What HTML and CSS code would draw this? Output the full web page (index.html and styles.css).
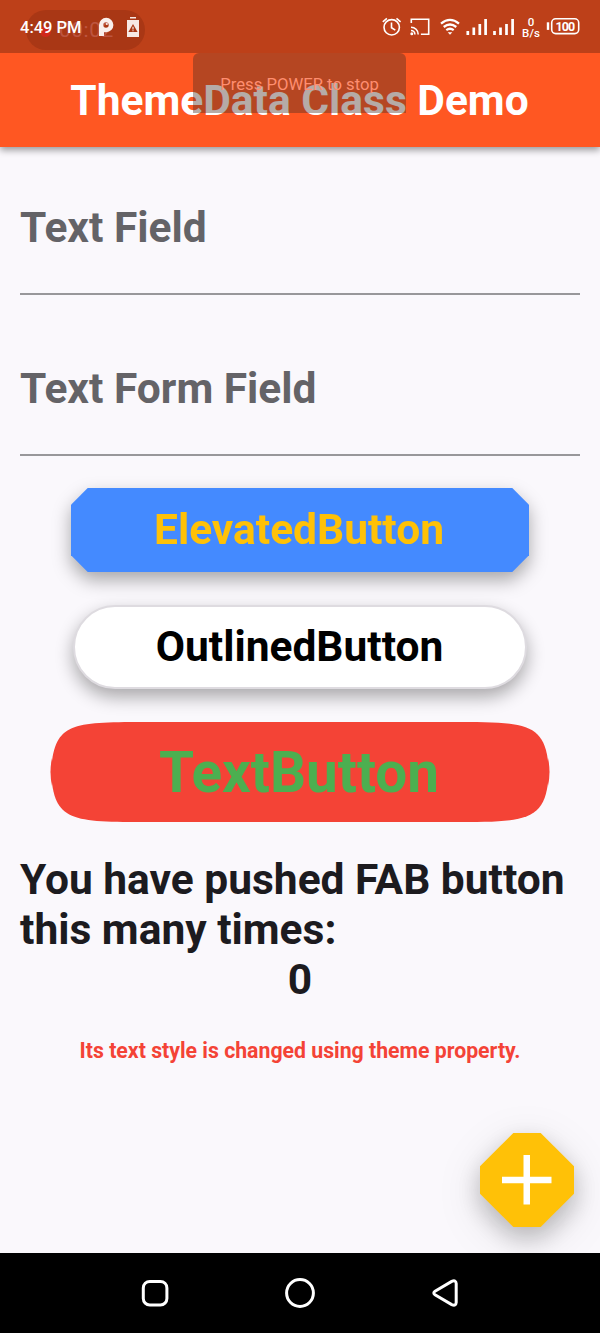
FILE: index.html
```html
<!DOCTYPE html>
<html lang="en">
<head>
<meta charset="utf-8">
<title>ThemeData Class Demo</title>
<link rel="stylesheet" href="styles.css">
</head>
<body>
<div class="screen">
  <div class="statusbar">
    <div class="recorder"><i class="rec-dot"></i><span>00:02</span></div>
    <div class="status-left">
      <span class="clock">4:49 PM</span>
      <svg class="ic-p" width="16" height="20" viewBox="0 0 16 20"><path fill="#f9efec" fill-rule="evenodd" d="M1 19V8a7.2 7.2 0 1 1 7.2 7.2H6V19zM8 5.3a2.7 2.7 0 1 0 0 5.4 2.7 2.7 0 0 0 0-5.4z"/><circle cx="8.8" cy="7" r="1.1" fill="#f9efec"/></svg>
      <svg class="ic-batt" width="14" height="21" viewBox="0 0 14 21"><path fill="#f7e9e5" d="M4 0h6v1.5H4zM1 3h12v17H1z"/><path fill="#a93715" d="M7 7l4.6 8H2.4z"/><path stroke="#f7e9e5" stroke-width="1.2" d="M7 9.8v2.7m0 .8v1"/></svg>
    </div>
    <svg class="status-right" width="200" height="26" viewBox="380 14 200 26" fill="none" stroke="#fff">
      <g stroke-width="1.6"><circle cx="391.7" cy="27.3" r="7.7"/><path d="M391.5 22.5v5.2l3.8 2.4M382.8 21.8l4.1-3.4M400.6 21.8l-4.1-3.4"/></g>
      <g stroke-width="1.6"><path d="M411.3 23v-3.8h17.4v15h-7.8M411 27.2a7.2 7.2 0 0 1 7.2 7.2M411 30.5a3.9 3.9 0 0 1 3.9 3.9"/><circle cx="411.8" cy="33.8" r=".7" fill="#fff"/></g>
      <g stroke-width="2.3"><path d="M441 23.6q9-7.4 18 0M443.7 27q6.3-5 12.6 0M446.3 30.2q3.7-2.8 7.4 0"/><path d="M447.7 32.2h4.6L450 34.8z" fill="#fff" stroke="none"/></g>
      <g stroke-width="2.7"><path d="M467.8 35v-4M473.8 35v-7.5M479.8 35V24M485.6 35V19M494.5 35v-4M500.5 35v-7.5M506.5 35V24M512.6 35V19"/></g>
      <g fill="#fff" stroke="none" font-family="Roboto, sans-serif" font-weight="500" text-anchor="middle"><text x="531" y="26" font-size="11.5">0</text><text x="531" y="37" font-size="11.5" textLength="18">B/s</text><text x="565.3" y="30.6" font-size="12.5" font-weight="700" textLength="19.5">100</text></g>
      <rect x="551.7" y="18.8" width="27" height="14.8" rx="4" stroke-width="1.6"/><path stroke-width="2.4" d="M548 22.3v7.6"/>
    </svg>
  </div>
  <header class="appbar"><h1>ThemeData Class Demo</h1><div class="toast">Press POWER to stop</div></header>
  <main class="content">
    <div class="field">Text Field</div>
    <div class="field second">Text Form Field</div>
    <div class="elevated"><button class="btn elevated-face"><span>ElevatedButton</span></button></div>
    <button class="btn outlined"><span>OutlinedButton</span></button>
    <button class="btn textbtn">
      <svg class="textbtn-shape" width="500" height="100" viewBox="0 0 500 100"><g fill="#f44336"><path d="M.9 50C4.2 0 20.6 0 100 0H400C479.4 0 495.8 0 499.1 50C495.8 100 479.4 100 400 100H100C20.6 100 4.2 100 .9 50Z"/><path d="M2 36Q-1 50 2 64ZM498 36Q501 50 498 64Z"/></g></svg>
      <span class="textbtn-label">TextButton</span>
    </button>
    <p class="message">You have pushed FAB button this many times:</p>
    <p class="count">0</p>
    <p class="note">Its text style is changed using theme property.</p>
    <div class="fab"><button class="fab-face" aria-label="Add"><svg width="50" height="50" viewBox="0 0 50 50"><path fill="#fff" d="M21.5 0h6.5v21.7H49.5v6.5H28V49.5H21.5V28.2H0V21.7H21.5z"/></svg></button></div>
  </main>
  <nav class="navbar">
    <svg width="30" height="32" viewBox="0 0 30 32"><rect x="3.3" y="4.4" width="23.6" height="23.6" rx="6.5"/></svg>
    <svg width="32" height="32" viewBox="0 0 32 32"><circle cx="16" cy="16" r="13.4"/></svg>
    <svg width="30" height="32" viewBox="0 0 30 32"><path d="M5 14.3L21.7 4.4Q26 2.6 26.2 6.5V25.5Q26 29.4 21.7 27.6L5 17.7Q2.6 16 5 14.3Z"/></svg>
  </nav>
</div>
</body>
</html>
```
FILE: styles.css
```css
* { box-sizing: border-box; }
body { margin: 0; font-family: Roboto, "Liberation Sans", sans-serif; background: #faf8fc; }
h1, p { margin: 0; }
button { border: 0; padding: 0; font: inherit; }
.screen { width: 600px; height: 1333px; display: flex; flex-direction: column; overflow: hidden; background: #faf8fc; }
.statusbar { position: relative; height: 53px; flex: none; background: #bd4019; display: flex; justify-content: space-between; padding: 14px 20px 0; color: #fff; z-index: 3; }
.recorder { position: absolute; left: 26px; top: 10px; width: 119px; height: 40px; border-radius: 20px; background: #a93715; color: #bd5540; font-size: 21px; line-height: 41px; padding-left: 33px; letter-spacing: .5px; }
.rec-dot { position: absolute; left: 14px; top: 16px; width: 11px; height: 11px; border-radius: 50%; background: #d0291a; }
.status-left { position: relative; display: flex; height: 26px; align-items: center; }
.clock { font-size: 16.5px; font-weight: 500; width: 61px; white-space: nowrap; line-height: 28px; padding-top: 1px; }
.ic-p { margin-left: 17px; }
.ic-batt { margin-left: 12px; }
.appbar { position: relative; z-index: 2; height: 94px; flex: none; background: #ff5722; display: flex; align-items: center; justify-content: center; padding-right: 1px; box-shadow: 0 3px 7px rgba(0,0,0,.4); }
.appbar h1 { padding-top: 1px; font-size: 42.5px; line-height: 50px; font-weight: 700; color: #fff; white-space: nowrap; }
.toast { position: absolute; left: 193px; top: 0; width: 213px; height: 60px; border-radius: 6px 6px 0 0; background: rgba(70,45,35,.4); color: #ff8e70; font-size: 16.7px; line-height: 64px; text-align: center; }
.content { position: relative; flex: 1; display: flex; flex-direction: column; align-items: center; padding: 0 20px; }
.field { width: 560px; height: 148px; padding-top: 56px; border-bottom: 2px solid #98979a; color: #646367; font-size: 42.5px; font-weight: 700; line-height: 50px; }
.field.second { height: 161px; padding-top: 69px; }
.elevated { margin-top: 32px; filter: drop-shadow(0 8px 9px rgba(0,0,0,.33)); }
.btn { display: flex; align-items: center; justify-content: center; font-size: 42.5px; font-weight: 700; line-height: 50px; white-space: nowrap; }
.elevated-face { width: 458px; height: 84px; padding-right: 2px; background: #448aff; color: #ffc107; clip-path: polygon(16.7px 0, calc(100% - 16.7px) 0, 100% 16.7px, 100% calc(100% - 16.7px), calc(100% - 16.7px) 100%, 16.7px 100%, 0 calc(100% - 16.7px), 0 16.7px); }
.outlined { width: 454px; height: 84px; padding-right: 1px; margin-top: 33px; border: 2px solid #dedbe0; border-radius: 42px; background: #fff; color: #000; box-shadow: 0 8px 18px rgba(0,0,0,.33); }
.textbtn { position: relative; width: 500px; height: 100px; padding: 1px 2px 0 0; margin-top: 33px; background: transparent; color: #4caf50; font-size: 56.6px; line-height: 70px; }
.textbtn-shape { position: absolute; left: 0; top: 0; }
.textbtn-label { position: relative; }
.message, .count { width: 560px; color: #1c1b1f; font-size: 42.5px; font-weight: 700; line-height: 50px; }
.message { margin-top: 33px; }
.count { text-align: center; }
.note { margin-top: 34px; color: #f44336; font-size: 21.25px; font-weight: 700; line-height: 24px; white-space: nowrap; }
.fab { position: absolute; right: 26px; bottom: 26px; filter: drop-shadow(0 10px 12px rgba(0,0,0,.2)) drop-shadow(0 10px 20px rgba(0,0,0,.12)); }
.fab-face { display: flex; align-items: center; justify-content: center; width: 94px; height: 94px; background: #ffc107; clip-path: polygon(33.3px 0, 60.7px 0, 100% 33.3px, 100% 60.7px, 60.7px 100%, 33.3px 100%, 0 60.7px, 0 33.3px); }
.navbar { position: relative; z-index: 2; height: 80px; flex: none; display: flex; align-items: center; justify-content: space-between; padding: 0 140px; background: #000; }
.navbar svg { fill: none; stroke: #fff; stroke-width: 3; }
```
